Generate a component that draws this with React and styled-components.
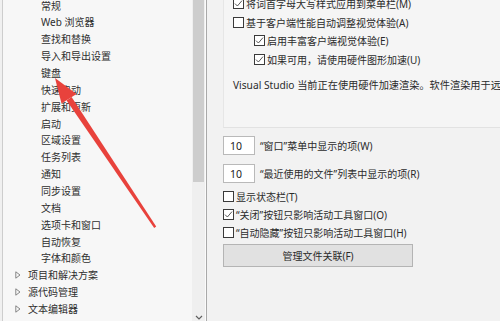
import React from 'react'
import styled, { createGlobalStyle } from 'styled-components'

const Global = createGlobalStyle`
  html, body { margin: 0; padding: 0; }
  body {
    width: 500px;
    height: 321px;
    overflow: hidden;
    background: #f0f0f0;
    font-family: "Noto Sans", "Noto Sans CJK SC", sans-serif;
    font-size: 10px;
    color: #2b2b2b;
  }
`

const treeItems = [
  { label: '常规', child: true },
  { label: 'Web 浏览器', child: true },
  { label: '查找和替换', child: true },
  { label: '导入和导出设置', child: true },
  { label: '键盘', child: true },
  { label: '快速启动', child: true },
  { label: '扩展和更新', child: true },
  { label: '启动', child: true },
  { label: '区域设置', child: true },
  { label: '任务列表', child: true },
  { label: '通知', child: true },
  { label: '同步设置', child: true },
  { label: '文档', child: true },
  { label: '选项卡和窗口', child: true },
  { label: '自动恢复', child: true },
  { label: '字体和颜色', child: true },
  { label: '项目和解决方案' },
  { label: '源代码管理' },
  { label: '文本编辑器' },
  { label: '调试' },
]

const Check = ({ checked }) => (
  <Box>
    {checked && (
      <svg width="9" height="9" viewBox="0 0 9 9">
        <path d="M1 4.6 L3.4 7 L8 1.6" fill="none" stroke="#444" strokeWidth="0.9" />
      </svg>
    )}
  </Box>
)

const Expander = () => (
  <svg width="6" height="8" viewBox="0 0 6 8">
    <path d="M0.8 0.8 L5 4 L0.8 7.2 Z" fill="none" stroke="#7a7a7a" strokeWidth="0.9" />
  </svg>
)

export default function App() {
  return (
    <>
      <Global />
      <Page>
        <Tree>
          <TreeList>
            {treeItems.map((item) => (
              <TreeRow key={item.label} $child={item.child}>
                {!item.child && <Toggle><Expander /></Toggle>}
                {item.label}
              </TreeRow>
            ))}
          </TreeList>
        </Tree>
        <ScrollBar>
          <Thumb />
          <Track />
          <ScrollArrow>
            <svg width="8" height="6" viewBox="0 0 8 6">
              <path d="M1 1 L4 4 L7 1" fill="none" stroke="#606060" strokeWidth="1.2" />
            </svg>
          </ScrollArrow>
        </ScrollBar>
        <Divider />
        <Options>
          <GroupBox>
            <CheckRow>
              <Check checked />
              将词首字母大写样式应用到菜单栏(M)
            </CheckRow>
            <CheckRow>
              <Check />
              基于客户端性能自动调整视觉体验(A)
            </CheckRow>
            <CheckRow $indent>
              <Check checked />
              启用丰富客户端视觉体验(E)
            </CheckRow>
            <CheckRow $indent>
              <Check checked />
              如果可用，请使用硬件图形加速(U)
            </CheckRow>
            <Note>Visual Studio 当前正在使用硬件加速渲染。软件渲染用于远程桌面会话。</Note>
          </GroupBox>
          <InputRow>
            <NumberBox>10</NumberBox>
            “窗口”菜单中显示的项(W)
          </InputRow>
          <InputRow $second>
            <NumberBox>10</NumberBox>
            “最近使用的文件”列表中显示的项(R)
          </InputRow>
          <LowerChecks>
            <SmallRow>
              <Check />
              显示状态栏(T)
            </SmallRow>
            <SmallRow>
              <Check checked />
              “关闭”按钮只影响活动工具窗口(O)
            </SmallRow>
            <SmallRow>
              <Check />
              “自动隐藏”按钮只影响活动工具窗口(H)
            </SmallRow>
          </LowerChecks>
          <Button>管理文件关联(F)</Button>
        </Options>
        <Arrow viewBox="0 0 500 321" width="500" height="321">
          <polygon
            points="71.6,97 66.6,100.6 154.2,228 156.2,226.6"
            fill="#e8423c"
          />
          <polygon points="55,78 76.5,94 61.5,103.6" fill="#e8423c" />
        </Arrow>
      </Page>
    </>
  )
}

const Page = styled.div`
  position: relative;
  display: flex;
  width: 500px;
  height: 321px;
  overflow: hidden;
  white-space: nowrap;
`

const Tree = styled.div`
  width: 189px;
  margin-left: 2px;
  border-left: 1px solid #cdcdcd;
  background: #f7f7f7;
  overflow: hidden;
`

const TreeList = styled.div`
  margin-top: -3.4px;
  display: flex;
  flex-direction: column;
`

const TreeRow = styled.div`
  height: 16.87px;
  display: flex;
  align-items: center;
  padding-left: ${(p) => (p.$child ? '38px' : '9px')};
  color: #2e2e2e;
`

const Toggle = styled.span`
  width: 13px;
  display: flex;
  align-items: center;
  padding-left: 3px;
`

const ScrollBar = styled.div`
  width: 13px;
  display: flex;
  flex-direction: column;
  background: #efefef;
`

const Thumb = styled.div`
  height: 182px;
  margin: 0 1px;
  background: #cdcdcd;
`

const Track = styled.div`
  flex: 1;
`

const ScrollArrow = styled.div`
  height: 6px;
  display: flex;
  justify-content: center;
  align-items: flex-start;
`

const Divider = styled.div`
  width: 2px;
  box-sizing: border-box;
  border-left: 1px solid #fbfbfb;
  background: #a9a9a9;
`

const Options = styled.div`
  flex: 1;
  display: flex;
  flex-direction: column;
  padding-left: 16px;
  background: #f2f2f2;
  overflow: hidden;
`

const GroupBox = styled.div`
  height: 134px;
  margin-top: -6px;
  padding: 0 0 0 9px;
  border-left: 1px solid #e6e6e6;
  border-bottom: 1px solid #e2e2e2;
  background: #f5f5f5;
  box-sizing: border-box;
  display: flex;
  flex-direction: column;
`

const CheckRow = styled.div`
  height: 18.7px;
  display: flex;
  align-items: center;
  gap: 2px;
  padding-left: ${(p) => (p.$indent ? '21px' : '0')};
`

const Box = styled.span`
  width: 11px;
  height: 11px;
  box-sizing: border-box;
  border: 1px solid #3a3a3a;
  background: #ffffff;
  display: inline-flex;
  align-items: center;
  justify-content: center;
  flex-shrink: 0;
`

const Note = styled.div`
  margin-top: 9px;
  line-height: 14px;
  font-size: 10.2px;
`

const InputRow = styled.div`
  display: flex;
  align-items: center;
  gap: 5px;
  margin-top: ${(p) => (p.$second ? '9px' : '8px')};
`

const NumberBox = styled.div`
  width: 32px;
  height: 19px;
  box-sizing: border-box;
  border: 1px solid #b9b9b9;
  background: #ffffff;
  padding-left: 6px;
  display: flex;
  align-items: center;
  font-size: 10.5px;
  color: #222;
`

const LowerChecks = styled.div`
  display: flex;
  flex-direction: column;
  margin-top: 5px;
`

const SmallRow = styled.div`
  height: 17.8px;
  display: flex;
  align-items: center;
  gap: 2px;
`

const Button = styled.div`
  width: 190px;
  height: 23px;
  margin-top: 3px;
  box-sizing: border-box;
  border: 1px solid #b4b4b4;
  background: #e1e1e1;
  display: flex;
  align-items: center;
  justify-content: center;
  color: #2b2b2b;
`

const Arrow = styled.svg`
  position: absolute;
  left: 0;
  top: 0;
  pointer-events: none;
`
